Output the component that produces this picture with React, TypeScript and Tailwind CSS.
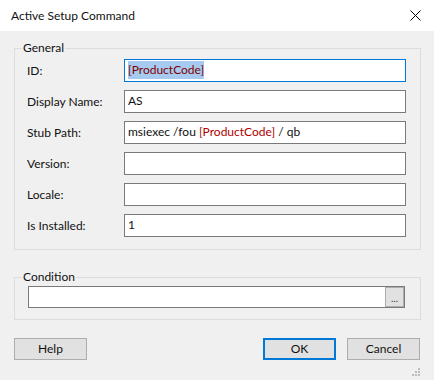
const font = { fontFamily: 'Lato, "Noto Sans", sans-serif' };

interface FieldRowProps {
  label: string;
  children?: React.ReactNode;
  focused?: boolean;
}

function FieldRow({ label, children, focused }: FieldRowProps) {
  return (
    <div className="flex items-center">
      <div className="w-[97px] shrink-0 text-[12px] text-[#111]">{label}</div>
      <div
        className={
          focused
            ? 'flex h-[23px] flex-1 items-center border border-[#0078d7] bg-white px-[3px] pb-[1px] text-[12px] text-[#111]'
            : 'flex h-[23px] flex-1 items-center border border-[#7a7a7a] bg-white px-[3px] pb-[1px] text-[12px] text-[#111]'
        }
      >
        {children}
      </div>
    </div>
  );
}

export default function App() {
  return (
    <div className="flex h-[380px] w-[434px] flex-col overflow-hidden bg-[#f0f0f0]" style={font}>
      {/* title bar */}
      <div className="flex h-[31px] shrink-0 items-center justify-between bg-white pl-[11px] pr-[12px]">
        <span className="text-[12px] text-[#111]">Active Setup Command</span>
        <svg width="11" height="11" viewBox="0 0 11 11" className="mr-[1px]">
          <path d="M0.5 0.5 L10.5 10.5 M10.5 0.5 L0.5 10.5" stroke="#000" strokeWidth="1" />
        </svg>
      </div>

      <div className="flex flex-1 flex-col px-[14px] pr-[13px]">
        {/* General group */}
        <fieldset className="mt-[9px] border border-[#dcdcdc] pb-[12px] pl-[12px] pr-[14px] pt-[3px]">
          <legend className="-ml-[5px] px-[1px] text-[12px] leading-[16px] text-[#111]">General</legend>
          <div className="flex flex-col gap-[8px]">
            <FieldRow label="ID:" focused>
              <span className="bg-[#a6caf0] text-[#800000]">[ProductCode]</span>
            </FieldRow>
            <FieldRow label="Display Name:">AS</FieldRow>
            <FieldRow label="Stub Path:">
              <span>
                msiexec /fou <span className="text-[#b00000]">[ProductCode]</span> / qb
              </span>
            </FieldRow>
            <FieldRow label="Version:" />
            <FieldRow label="Locale:" />
            <FieldRow label="Is Installed:">1</FieldRow>
          </div>
        </fieldset>

        {/* Condition group */}
        <fieldset className="mt-[19px] border border-[#dcdcdc] pb-[11px] pl-[13px] pr-[15px] pt-[1px]">
          <legend className="-ml-[6px] px-[1px] text-[12px] leading-[16px] text-[#111]">Condition</legend>
          <div className="flex h-[22px] items-center justify-end border border-[#7a7a7a] bg-white">
            <div className="flex h-[20px] w-[19px] items-end justify-center border border-[#adadad] bg-[#e1e1e1] pb-[3px] text-[10px] leading-[10px] text-[#333]">
              ...
            </div>
          </div>
        </fieldset>

        {/* buttons */}
        <div className="mt-[18px] flex items-center">
          <button className="h-[22px] w-[73px] border border-[#adadad] bg-[#e1e1e1] text-[12px] text-[#111]">
            Help
          </button>
          <div className="flex-1" />
          <button className="h-[22px] w-[73px] border-2 border-[#0078d7] bg-[#e1e1e1] text-[12px] text-[#111]">
            OK
          </button>
          <button className="ml-[11px] mr-[1px] h-[22px] w-[73px] border border-[#adadad] bg-[#e1e1e1] text-[12px] text-[#111]">
            Cancel
          </button>
        </div>

        {/* resize grip */}
        <div className="mt-auto flex justify-end pb-[3px]">
          <svg width="10" height="10" viewBox="0 0 10 10">
            <rect x="7" y="1" width="2" height="2" fill="#bcbcbc" />
            <rect x="4" y="4" width="2" height="2" fill="#bcbcbc" />
            <rect x="7" y="4" width="2" height="2" fill="#bcbcbc" />
            <rect x="1" y="7" width="2" height="2" fill="#bcbcbc" />
            <rect x="4" y="7" width="2" height="2" fill="#bcbcbc" />
            <rect x="7" y="7" width="2" height="2" fill="#bcbcbc" />
          </svg>
        </div>
      </div>
    </div>
  );
}
